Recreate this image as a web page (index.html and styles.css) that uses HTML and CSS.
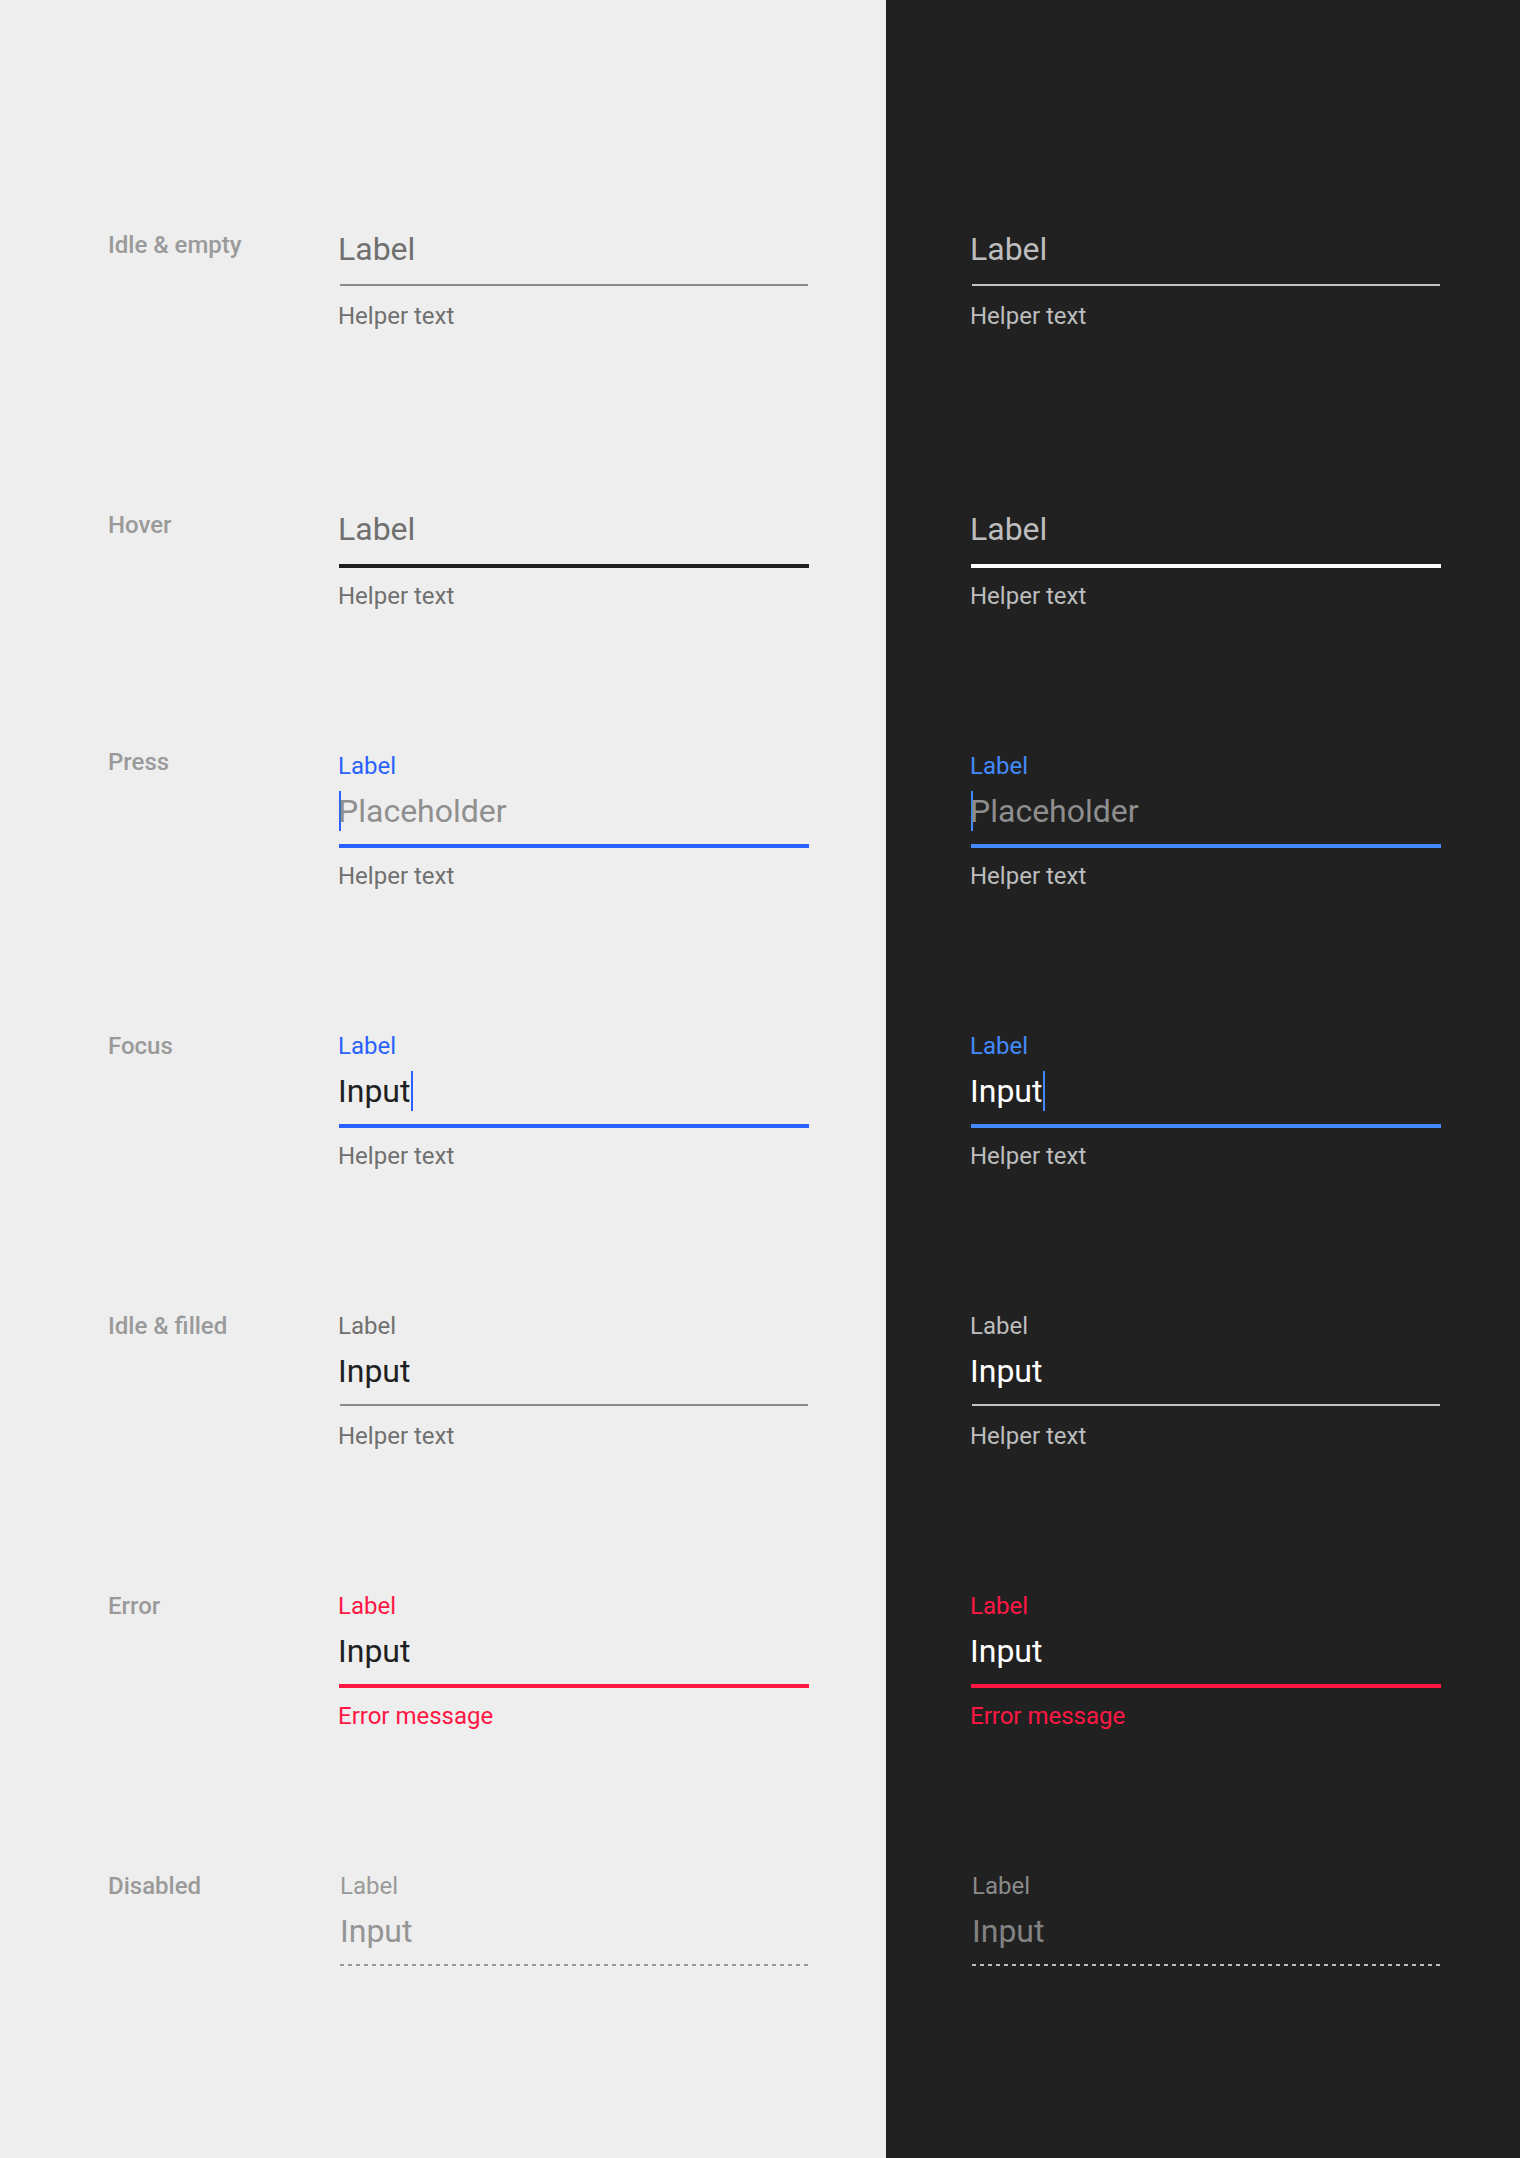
FILE: index.html
```html
<!DOCTYPE html>
<html lang="en">
<head>
<meta charset="utf-8">
<title>Text field states</title>
<link rel="stylesheet" href="styles.css">
</head>
<body>
<main class="sheet">
  <section class="panel panel-light">
    <div class="row">
      <div class="row-label is-low">Idle &amp; empty</div>
      <div class="field is-idle">
        <div class="f-label"></div>
        <div class="f-input is-biglabel">Label</div>
        <div class="f-line"></div>
        <div class="f-helper">Helper text</div>
      </div>
    </div>
    <div class="row">
      <div class="row-label is-low">Hover</div>
      <div class="field is-hover">
        <div class="f-label"></div>
        <div class="f-input is-biglabel">Label</div>
        <div class="f-line"></div>
        <div class="f-helper">Helper text</div>
      </div>
    </div>
    <div class="row">
      <div class="row-label is-up">Press</div>
      <div class="field is-press">
        <div class="f-label">Label</div>
        <div class="f-input is-placeholder"><span class="caret caret-before"></span>Placeholder</div>
        <div class="f-line"></div>
        <div class="f-helper">Helper text</div>
      </div>
    </div>
    <div class="row">
      <div class="row-label">Focus</div>
      <div class="field is-focus">
        <div class="f-label">Label</div>
        <div class="f-input">Input<span class="caret caret-after"></span></div>
        <div class="f-line"></div>
        <div class="f-helper">Helper text</div>
      </div>
    </div>
    <div class="row">
      <div class="row-label">Idle &amp; filled</div>
      <div class="field is-filled">
        <div class="f-label">Label</div>
        <div class="f-input">Input</div>
        <div class="f-line"></div>
        <div class="f-helper">Helper text</div>
      </div>
    </div>
    <div class="row">
      <div class="row-label">Error</div>
      <div class="field is-error">
        <div class="f-label">Label</div>
        <div class="f-input">Input</div>
        <div class="f-line"></div>
        <div class="f-helper">Error message</div>
      </div>
    </div>
    <div class="row">
      <div class="row-label">Disabled</div>
      <div class="field is-disabled">
        <div class="f-label">Label</div>
        <div class="f-input">Input</div>
        <div class="f-line"></div>
      </div>
    </div>
  </section>

  <section class="panel panel-dark">
    <div class="row">
      <div class="field is-idle">
        <div class="f-label"></div>
        <div class="f-input is-biglabel">Label</div>
        <div class="f-line"></div>
        <div class="f-helper">Helper text</div>
      </div>
    </div>
    <div class="row">
      <div class="field is-hover">
        <div class="f-label"></div>
        <div class="f-input is-biglabel">Label</div>
        <div class="f-line"></div>
        <div class="f-helper">Helper text</div>
      </div>
    </div>
    <div class="row">
      <div class="field is-press">
        <div class="f-label">Label</div>
        <div class="f-input is-placeholder"><span class="caret caret-before"></span>Placeholder</div>
        <div class="f-line"></div>
        <div class="f-helper">Helper text</div>
      </div>
    </div>
    <div class="row">
      <div class="field is-focus">
        <div class="f-label">Label</div>
        <div class="f-input">Input<span class="caret caret-after"></span></div>
        <div class="f-line"></div>
        <div class="f-helper">Helper text</div>
      </div>
    </div>
    <div class="row">
      <div class="field is-filled">
        <div class="f-label">Label</div>
        <div class="f-input">Input</div>
        <div class="f-line"></div>
        <div class="f-helper">Helper text</div>
      </div>
    </div>
    <div class="row">
      <div class="field is-error">
        <div class="f-label">Label</div>
        <div class="f-input">Input</div>
        <div class="f-line"></div>
        <div class="f-helper">Error message</div>
      </div>
    </div>
    <div class="row">
      <div class="field is-disabled">
        <div class="f-label">Label</div>
        <div class="f-input">Input</div>
        <div class="f-line"></div>
      </div>
    </div>
  </section>
</main>
</body>
</html>
```

FILE: styles.css
```css
* { box-sizing: border-box; }

html, body {
  margin: 0;
  padding: 0;
}

body {
  font-family: Roboto, "Noto Sans", "Liberation Sans", sans-serif;
  width: 1520px;
  height: 2158px;
  overflow: hidden;
}

.sheet {
  display: flex;
  width: 1520px;
  height: 2158px;
}

.panel {
  display: flex;
  flex-direction: column;
  padding-top: 190px;
}

.panel-light {
  width: 886px;
  flex: 0 0 886px;
  background: #eeeeee;
  padding-left: 108px;
  --label: #707070;
  --helper: #707070;
  --input: #1f1f1f;
  --placeholder: #8f8f8f;
  --line: #8a8a8a;
  --line-hover: #1f1f1f;
  --accent: #2962ff;
  --error: #ff1744;
  --dis-label: #9a9a9a;
  --dis-input: #959595;
  --dis-line: #959595;
}

.panel-dark {
  flex: 1 1 auto;
  background: #212121;
  padding-left: 85px;
  --label: #bdbdbd;
  --helper: #bdbdbd;
  --input: #ffffff;
  --placeholder: #8e8e8e;
  --line: #c4c4c4;
  --line-hover: #ffffff;
  --accent: #448aff;
  --error: #ff1744;
  --dis-label: #8a8a8a;
  --dis-input: #828282;
  --dis-line: #c0c0c0;
}

.row {
  display: flex;
  height: 280px;
  flex: 0 0 280px;
}

.row-label {
  width: 231px;
  flex: 0 0 231px;
  font-size: 24px;
  line-height: 32px;
  font-weight: 500;
  color: #9a9a9a;
  white-space: nowrap;
}

.row-label.is-low {
  padding-top: 39px;
}

.row-label.is-up {
  margin-top: -4px;
}

.field {
  width: 470px;
  flex: 0 0 470px;
  display: flex;
  flex-direction: column;
}

.f-label {
  height: 32px;
  font-size: 24px;
  line-height: 32px;
  color: var(--label);
  margin-bottom: 9px;
  margin-left: -1px;
  white-space: nowrap;
}

.f-input {
  height: 40px;
  font-size: 32px;
  line-height: 40px;
  color: var(--input);
  margin-bottom: 13px;
  margin-left: -1px;
  white-space: nowrap;
  display: flex;
  align-items: flex-start;
}

.f-input.is-biglabel {
  color: var(--label);
  margin-top: -2px;
  margin-bottom: 15px;
}

.f-input.is-placeholder {
  color: var(--placeholder);
  margin-left: 0;
}

.caret {
  display: inline-block;
  width: 2px;
  height: 40px;
  background: var(--accent);
  flex: 0 0 2px;
}

.caret-before {
  margin-right: -3px;
}

.caret-after {
  margin-left: 1px;
}

.f-line {
  height: 4px;
  margin-bottom: 12px;
}

.is-idle .f-line,
.is-filled .f-line {
  margin-left: 1px;
  margin-right: 1px;
  border-top: 2px solid var(--line);
}

.is-hover .f-line {
  background: var(--line-hover);
}

.is-press .f-line,
.is-focus .f-line {
  background: var(--accent);
}

.is-press .f-label,
.is-focus .f-label {
  color: var(--accent);
}

.is-error .f-line {
  background: var(--error);
}

.is-error .f-label,
.is-error .f-helper {
  color: var(--error);
}

.is-disabled .f-label {
  color: var(--dis-label);
  margin-left: 1px;
}

.is-disabled .f-input {
  color: var(--dis-input);
  margin-left: 1px;
}

.is-disabled .f-line {
  margin-left: 1px;
  margin-right: 1px;
  height: 2px;
  background-image: linear-gradient(to right, var(--dis-line) 50%, transparent 50%);
  background-size: 8px 2px;
  background-repeat: repeat-x;
}

.f-helper {
  font-size: 24px;
  line-height: 32px;
  color: var(--helper);
  margin-left: -1px;
  white-space: nowrap;
}
```
